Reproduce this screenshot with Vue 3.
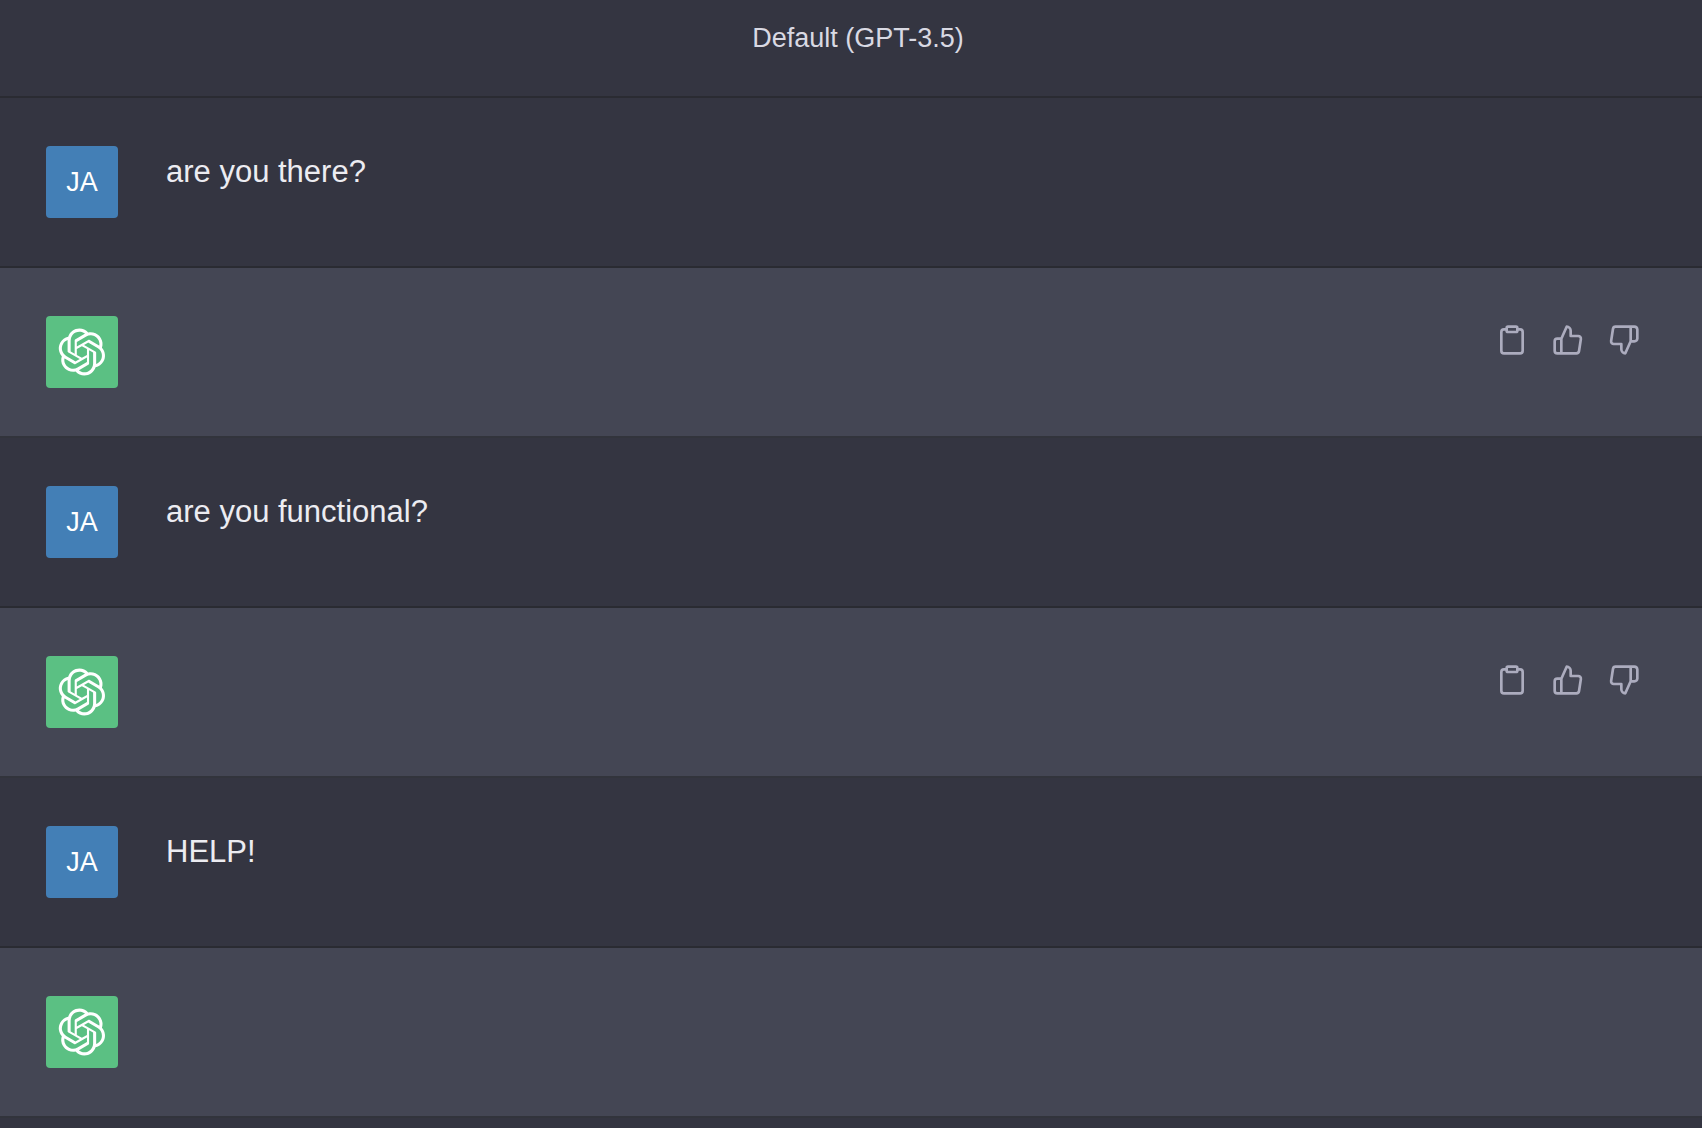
<template>
  <main class="chat">
    <header class="chat-header">
      <h1 class="chat-title">{{ title }}</h1>
    </header>
    <article
      v-for="message in messages"
      :key="message.id"
      class="message"
      :class="message.role"
    >
      <div v-if="message.role === 'user'" class="avatar">JA</div>
      <div v-else class="avatar">
        <svg class="logo" viewBox="0 0 41 41" role="img" aria-label="Assistant">
          <path :d="logoPath" />
        </svg>
      </div>
      <p class="message-text">{{ message.text }}</p>
      <div v-if="message.actions" class="actions">
        <button
          v-for="action in actions"
          :key="action.label"
          type="button"
          class="action"
          :aria-label="action.label"
        >
          <svg viewBox="0 0 24 24" aria-hidden="true">
            <path v-for="d in action.paths" :key="d" :d="d" />
          </svg>
        </button>
      </div>
    </article>
  </main>
</template>

<script setup>
const title = 'Default (GPT-3.5)'

const messages = [
  { id: 1, role: 'user', text: 'are you there?' },
  { id: 2, role: 'assistant', text: '', actions: true },
  { id: 3, role: 'user', text: 'are you functional?' },
  { id: 4, role: 'assistant', text: '', actions: true },
  { id: 5, role: 'user', text: 'HELP!' },
  { id: 6, role: 'assistant', text: '' },
]

const actions = [
  {
    label: 'Copy',
    paths: [
      'M16 4h2a2 2 0 0 1 2 2v14a2 2 0 0 1-2 2H6a2 2 0 0 1-2-2V6a2 2 0 0 1 2-2h2',
      'M9 2h6a1 1 0 0 1 1 1v2a1 1 0 0 1-1 1H9a1 1 0 0 1-1-1V3a1 1 0 0 1 1-1z',
    ],
  },
  {
    label: 'Good response',
    paths: [
      'M14 9V5a3 3 0 0 0-3-3l-4 9v11h11.28a2 2 0 0 0 2-1.7l1.38-9a2 2 0 0 0-2-2.3zM7 22H4a2 2 0 0 1-2-2v-7a2 2 0 0 1 2-2h3',
    ],
  },
  {
    label: 'Bad response',
    paths: [
      'M10 15v4a3 3 0 0 0 3 3l4-9V2H5.72a2 2 0 0 0-2 1.7l-1.38 9a2 2 0 0 0 2 2.3zm7-13h2.67A2.31 2.31 0 0 1 22 4v7a2.31 2.31 0 0 1-2.33 2H17',
    ],
  },
]

const logoPath =
  'M37.5324 16.8707C37.9808 15.5241 38.1363 14.0974 37.9886 12.6859C37.8409 11.2744 37.3934 9.91076 36.676 8.68622C35.6126 6.83404 33.9882 5.3676 32.0373 4.4985C30.0864 3.62941 27.9098 3.40259 25.8215 3.85078C24.8796 2.7893 23.7219 1.94125 22.4257 1.36341C21.1295 0.785575 19.7249 0.491269 18.3058 0.500197C16.1708 0.495044 14.0893 1.16803 12.3614 2.42214C10.6335 3.67624 9.34853 5.44666 8.6917 7.47815C7.30085 7.76286 5.98686 8.3414 4.8377 9.17505C3.68854 10.0087 2.73073 11.0782 2.02839 12.312C0.956464 14.1591 0.498905 16.2988 0.721698 18.4228C0.944492 20.5467 1.83612 22.5449 3.268 24.1293C2.81966 25.4759 2.66413 26.9026 2.81182 28.3141C2.95951 29.7256 3.40701 31.0892 4.12437 32.3138C5.18791 34.1659 6.8123 35.6322 8.76321 36.5013C10.7141 37.3704 12.8907 37.5973 14.9789 37.1492C15.9208 38.2107 17.0786 39.0587 18.3747 39.6366C19.6709 40.2144 21.0755 40.5087 22.4946 40.4998C24.6307 40.5054 26.7133 39.8321 28.4418 38.5772C30.1704 37.3223 31.4556 35.5506 32.1119 33.5179C33.5027 33.2332 34.8167 32.6547 35.9659 31.821C37.115 30.9874 38.0728 29.9178 38.7752 28.684C39.8458 26.8371 40.3023 24.6979 40.0789 22.5748C39.8556 20.4517 38.9639 18.4544 37.5324 16.8707ZM22.4978 37.8849C20.7443 37.8874 19.0459 37.2733 17.6994 36.1501C17.7601 36.117 17.8666 36.0586 17.936 36.0161L25.9004 31.4156C26.1003 31.3019 26.2663 31.137 26.3813 30.9378C26.4964 30.7386 26.5563 30.5124 26.5549 30.2825V19.0542L29.9213 20.998C29.9389 21.0068 29.9541 21.0198 29.9656 21.0359C29.977 21.052 29.9842 21.0707 29.9867 21.0902V30.3889C29.9842 32.375 29.1946 34.2791 27.7909 35.6841C26.3872 37.0892 24.4838 37.8806 22.4978 37.8849ZM6.39227 31.0064C5.51397 29.4888 5.19742 27.7107 5.49804 25.9832C5.55718 26.0187 5.66048 26.0818 5.73461 26.1244L13.699 30.7248C13.8975 30.8408 14.1233 30.902 14.3532 30.902C14.583 30.902 14.8088 30.8408 15.0073 30.7248L24.731 25.1103V28.9979C24.7321 29.0177 24.7283 29.0376 24.7199 29.0556C24.7115 29.0736 24.6988 29.0893 24.6829 29.1012L16.6317 33.7497C14.9096 34.7416 12.8643 35.0097 10.9447 34.4954C9.02506 33.9811 7.38785 32.7263 6.39227 31.0064ZM4.29707 13.6194C5.17156 12.0998 6.55279 10.9364 8.19885 10.3327C8.19885 10.4013 8.19491 10.5228 8.19491 10.6071V19.808C8.19351 20.0378 8.25334 20.2638 8.36823 20.4629C8.48312 20.6619 8.64893 20.8267 8.84863 20.9404L18.5723 26.5542L15.206 28.4979C15.1894 28.5089 15.1703 28.5155 15.1505 28.5173C15.1307 28.5191 15.1107 28.516 15.0924 28.5082L7.04046 23.8557C5.32135 22.8601 4.06716 21.2235 3.55289 19.3046C3.03862 17.3858 3.30624 15.3413 4.29707 13.6194ZM31.955 20.0556L22.2312 14.4411L25.5976 12.4981C25.6142 12.4872 25.6333 12.4805 25.6531 12.4787C25.6729 12.4769 25.6928 12.4801 25.7111 12.4879L33.7631 17.1364C34.9967 17.849 36.0017 18.8982 36.6606 20.1613C37.3194 21.4244 37.6047 22.849 37.4832 24.2684C37.3617 25.6878 36.8382 27.0432 35.9743 28.1759C35.1103 29.3086 33.9415 30.1717 32.6047 30.6641C32.6047 30.5947 32.6047 30.4733 32.6047 30.3889V21.188C32.6066 20.9586 32.5474 20.7328 32.4332 20.5338C32.319 20.3348 32.154 20.1698 31.955 20.0556ZM35.3055 15.0128C35.2464 14.9765 35.1431 14.9142 35.069 14.8717L27.1045 10.2712C26.906 10.1554 26.6803 10.0943 26.4504 10.0943C26.2206 10.0943 25.9948 10.1554 25.7963 10.2712L16.0726 15.8858V11.9982C16.0715 11.9783 16.0753 11.9585 16.0837 11.9405C16.0921 11.9225 16.1048 11.9068 16.1207 11.8949L24.1719 7.25025C25.4053 6.53903 26.8158 6.19376 28.2383 6.25482C29.6608 6.31589 31.0364 6.78077 32.2044 7.59508C33.3723 8.40939 34.2842 9.53945 34.8334 10.8531C35.3826 12.1667 35.5464 13.6095 35.3055 15.0128ZM14.2424 21.9419L10.8752 19.9981C10.8576 19.9893 10.8423 19.9763 10.8309 19.9602C10.8195 19.9441 10.8122 19.9254 10.8098 19.9058V10.6071C10.8107 9.18295 11.2173 7.78848 11.9819 6.58696C12.7466 5.38544 13.8377 4.42659 15.1275 3.82264C16.4173 3.21869 17.8524 2.99464 19.2649 3.1767C20.6775 3.35876 22.0089 3.93941 23.1034 4.85067C23.0427 4.88379 22.937 4.94215 22.8668 4.98473L14.9024 9.58517C14.7025 9.69878 14.5366 9.86356 14.4215 10.0626C14.3065 10.2616 14.2466 10.4877 14.2479 10.7175L14.2424 21.9419ZM16.071 17.9991L20.4018 15.4978L24.7325 17.9975V22.9985L20.4018 25.4983L16.071 22.9985V17.9991Z'
</script>

<style>
body {
  background: #343541;
}
</style>

<style scoped>
.chat {
  font-family: "Liberation Sans", Arial, sans-serif;
  color: #ececf1;
}

.chat-header {
  display: flex;
  justify-content: center;
  padding: 20px 0 40px 14px;
  border-bottom: 2px solid rgba(32, 33, 35, 0.5);
}

.chat-title {
  margin: 0;
  font-size: 27px;
  font-weight: 400;
  line-height: 36px;
  color: #d9d9e3;
}

.message {
  display: flex;
  align-items: flex-start;
  padding: 48px 54px 48px 46px;
  border-bottom: 2px solid rgba(32, 33, 35, 0.5);
}

.message.assistant {
  background: #444654;
}

.avatar {
  display: flex;
  flex-shrink: 0;
  align-items: center;
  justify-content: center;
  width: 72px;
  height: 72px;
  margin-right: 48px;
  border-radius: 4px;
  font-size: 27px;
  color: #ffffff;
  background: #437fb6;
}

.assistant .avatar {
  background: #5bc083;
}

.logo {
  width: 48px;
  height: 48px;
  fill: currentColor;
}

.message-text {
  flex: 1 1 auto;
  min-width: 0;
  margin: 0;
  font-size: 31px;
  line-height: 52px;
}

.actions {
  display: flex;
  gap: 8px;
}

.action {
  display: flex;
  padding: 8px;
  border: 0;
  border-radius: 8px;
  color: #acacbe;
  background: transparent;
  cursor: pointer;
}

.action:hover {
  color: #d9d9e3;
}

.action svg {
  width: 32px;
  height: 32px;
  fill: none;
  stroke: currentColor;
  stroke-width: 2;
  stroke-linecap: round;
  stroke-linejoin: round;
}
</style>
